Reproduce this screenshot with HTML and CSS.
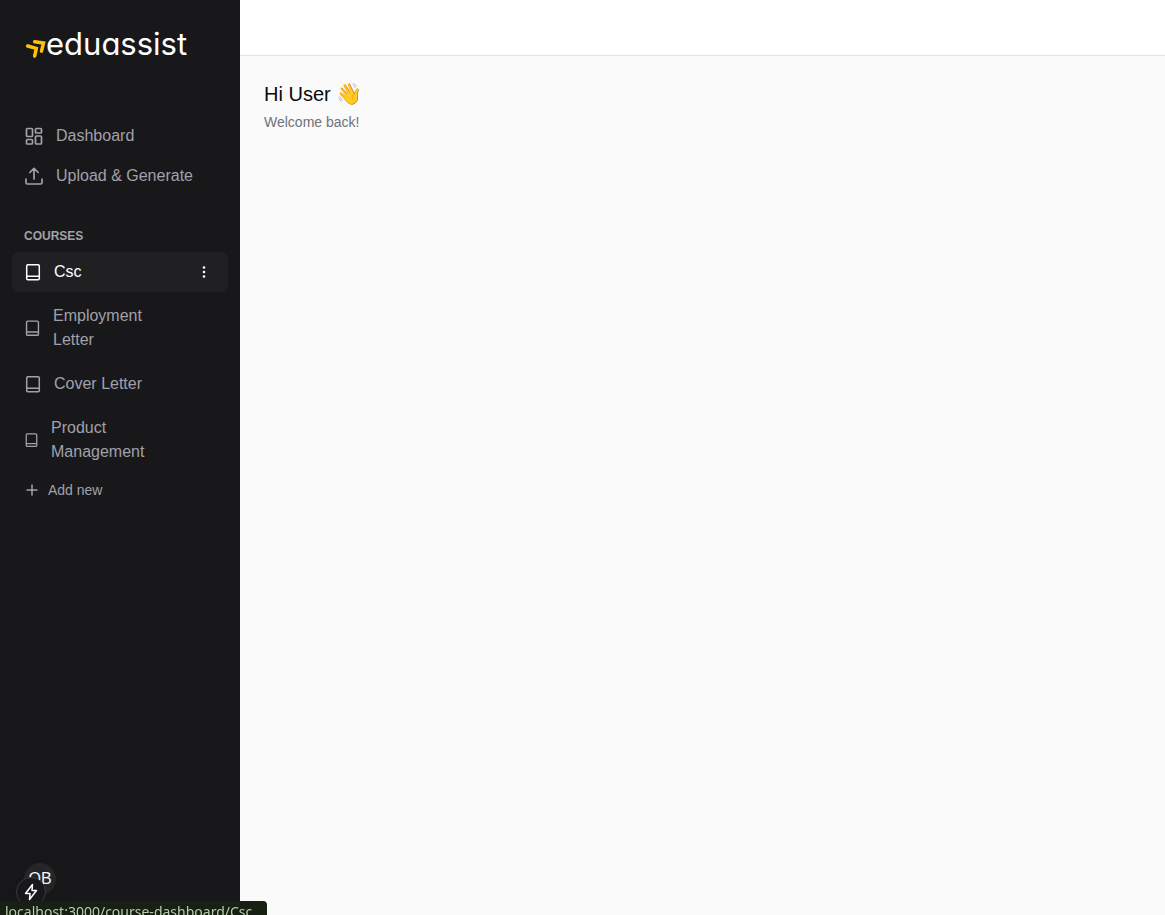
FILE: index.html
```html
<!DOCTYPE html>
<html lang="en">
<head>
  <meta charset="UTF-8">
  <meta name="viewport" content="width=device-width, initial-scale=1.0">
  <title>eduassist</title>
  <link rel="stylesheet" href="styles.css">
</head>
<body>

  <!-- shared icon shapes -->
  <svg class="sprite" aria-hidden="true">
    <symbol id="book" viewBox="0 0 18 18">
      <rect x="2.7" y="1.7" width="12.6" height="15" rx="1.2"/>
      <path d="M3 13.3h12"/>
    </symbol>
  </svg>

  <div class="layout">
    <aside class="sidebar">
      <a href="#" class="logo">
        <svg class="logo-mark" viewBox="0 0 22 22" aria-hidden="true">
          <path d="M10.6 4.7l8.9 1.2-2 8.2"/>
          <path d="M3.7 9l8.6 2.4-1.6 7.6"/>
        </svg>
        <span class="logo-text">eduassist</span>
      </a>

      <nav class="nav">
        <a href="#" class="nav-link">
          <svg class="icon" viewBox="0 0 20 20" aria-hidden="true">
            <rect x="2.5" y="2.5" width="6" height="8" rx="1"/>
            <rect x="11.5" y="2.5" width="6" height="4.5" rx="1"/>
            <rect x="11.5" y="10" width="6" height="8" rx="1"/>
            <rect x="2.5" y="13.5" width="6" height="4.5" rx="1"/>
          </svg>
          <span>Dashboard</span>
        </a>
        <a href="#" class="nav-link">
          <svg class="icon" viewBox="0 0 20 20" aria-hidden="true">
            <path d="M2 13v3.5A1.5 1.5 0 0 0 3.5 18h13a1.5 1.5 0 0 0 1.5-1.5V13M10 13V2.5M5.8 6.5L10 2.3l4.2 4.2"/>
          </svg>
          <span>Upload &amp; Generate</span>
        </a>
      </nav>

      <h2 class="section-title">Courses</h2>
      <ul class="courses">
        <li class="course active">
          <a href="#" class="course-link">
            <svg class="icon book" aria-hidden="true"><use href="#book"/></svg>
            <span>Csc</span>
          </a>
          <button class="more" aria-label="Course options">
            <svg viewBox="0 0 16 16" aria-hidden="true">
              <circle cx="8" cy="3.5" r="1.3"/>
              <circle cx="8" cy="8" r="1.3"/>
              <circle cx="8" cy="12.5" r="1.3"/>
            </svg>
          </button>
        </li>
        <li class="course">
          <a href="#" class="course-link">
            <svg class="icon book medium" aria-hidden="true"><use href="#book"/></svg>
            <span>Employment Letter</span>
          </a>
        </li>
        <li class="course">
          <a href="#" class="course-link">
            <svg class="icon book" aria-hidden="true"><use href="#book"/></svg>
            <span>Cover Letter</span>
          </a>
        </li>
        <li class="course">
          <a href="#" class="course-link">
            <svg class="icon book small" aria-hidden="true"><use href="#book"/></svg>
            <span>Product Management</span>
          </a>
        </li>
      </ul>
      <button class="add-new">
        <svg viewBox="0 0 16 16" aria-hidden="true"><path d="M8 3v10M3 8h10"/></svg>
        <span>Add new</span>
      </button>

      <button class="avatar">OB</button>
    </aside>

    <div class="content">
      <header class="topbar"></header>
      <main class="main">
        <h1>Hi User <span class="wave">👋</span></h1>
        <p>Welcome back!</p>
      </main>
    </div>
  </div>

  <div class="dev-badge">
    <svg viewBox="0 0 20 20" aria-hidden="true"><path d="M11.5 2.5l-7 9H9l-.5 6 7-9H11z"/></svg>
  </div>
  <div class="status">localhost:3000/course-dashboard/Csc</div>

</body>
</html>
```
FILE: styles.css
```css
* {
  box-sizing: border-box;
}
body {
  margin: 0;
  font-family: "Liberation Sans", Arial, sans-serif;
  font-size: 16px;
  line-height: 24px;
  color: #09090b;
  background-color: #fafafa;
}
a {
  color: inherit;
  text-decoration: none;
}
button {
  padding: 0;
  border: none;
  background: none;
  color: inherit;
  font: inherit;
  cursor: pointer;
}
h1, h2, p, ul {
  margin: 0;
  padding: 0;
}
svg {
  flex-shrink: 0;
  fill: none;
  stroke: currentColor;
  stroke-linecap: round;
  stroke-linejoin: round;
}
.sprite {
  position: absolute;
  width: 0;
  height: 0;
}
.layout {
  display: flex;
  min-height: 100vh;
}

/* sidebar */
.sidebar {
  display: flex;
  flex-direction: column;
  width: 240px;
  flex-shrink: 0;
  padding: 24px 12px 20px;
  background-color: #18181b;
  color: #a1a1aa;
}
.logo {
  display: flex;
  align-items: center;
  height: 40px;
  padding: 0 12px;
  color: #fff;
}
.logo-mark {
  width: 22px;
  height: 22px;
  margin-top: 8px;
  stroke: #ffc107;
  stroke-width: 3.5;
  stroke-linejoin: miter;
}
.logo-text {
  font-family: Inter, sans-serif;
  font-size: 31px;
  font-weight: 400;
  font-feature-settings: "cv11";
}
.nav {
  margin-top: 52px;
}
.nav-link {
  display: flex;
  align-items: center;
  gap: 12px;
  height: 40px;
  padding: 0 12px;
}
.icon {
  width: 20px;
  height: 20px;
  stroke-width: 1.7;
}
.section-title {
  margin: 32px 12px 8px;
  font-size: 12px;
  line-height: 16px;
  text-transform: uppercase;
}
.courses {
  display: flex;
  flex-direction: column;
  gap: 4px;
  list-style: none;
}
.course {
  display: flex;
  align-items: center;
  padding: 8px 12px;
  border-radius: 6px;
}
.course.active {
  background-color: #202022;
  color: #fff;
}
.course-link {
  display: flex;
  align-items: center;
  gap: 12px;
  flex: 1;
  padding-right: 40px;
}
.book {
  width: 18px;
  height: 18px;
  stroke-width: 1.5;
}
.book.medium {
  width: 17px;
}
.book.small {
  width: 15px;
}
.more {
  display: flex;
  padding: 4px;
}
.more svg {
  width: 16px;
  height: 16px;
  fill: currentColor;
  stroke: none;
}
.add-new {
  display: flex;
  align-items: center;
  gap: 8px;
  height: 36px;
  padding: 0 12px;
  font-size: 14px;
}
.add-new svg {
  width: 16px;
  height: 16px;
  stroke-width: 1.5;
}
.avatar {
  width: 32px;
  height: 32px;
  margin: auto 0 0 12px;
  border-radius: 50%;
  background-color: #27272a;
  color: #fff;
}

/* page */
.content {
  flex: 1;
}
.topbar {
  height: 56px;
  border-bottom: 1px solid #e4e4e7;
  background-color: #fff;
}
.main {
  padding: 24px;
}
.main h1 {
  font-size: 20px;
  font-weight: 400;
  line-height: 28px;
}
.wave {
  font-size: 21px;
  line-height: 24px;
}
.main p {
  margin-top: 4px;
  font-size: 14px;
  line-height: 20px;
  color: #71717a;
}

/* overlays */
.dev-badge {
  position: fixed;
  left: 16px;
  bottom: 8px;
  display: flex;
  align-items: center;
  justify-content: center;
  width: 30px;
  height: 30px;
  border: 1px solid #3a3a3d;
  border-radius: 50%;
  background-color: #18181b;
  box-shadow: 0 0 32px rgba(0, 0, 0, 0.2);
  color: #fff;
}
.dev-badge svg {
  width: 20px;
  height: 20px;
  stroke-width: 1.5;
}
.status {
  position: fixed;
  left: 0;
  bottom: 0;
  min-width: 267px;
  height: 14px;
  padding: 0 6px 0 5px;
  overflow: hidden;
  border-top-right-radius: 4px;
  background-color: #172013;
  color: #b5ceaa;
  font-family: "Noto Sans", sans-serif;
  font-size: 14px;
  line-height: 22px;
}
```
